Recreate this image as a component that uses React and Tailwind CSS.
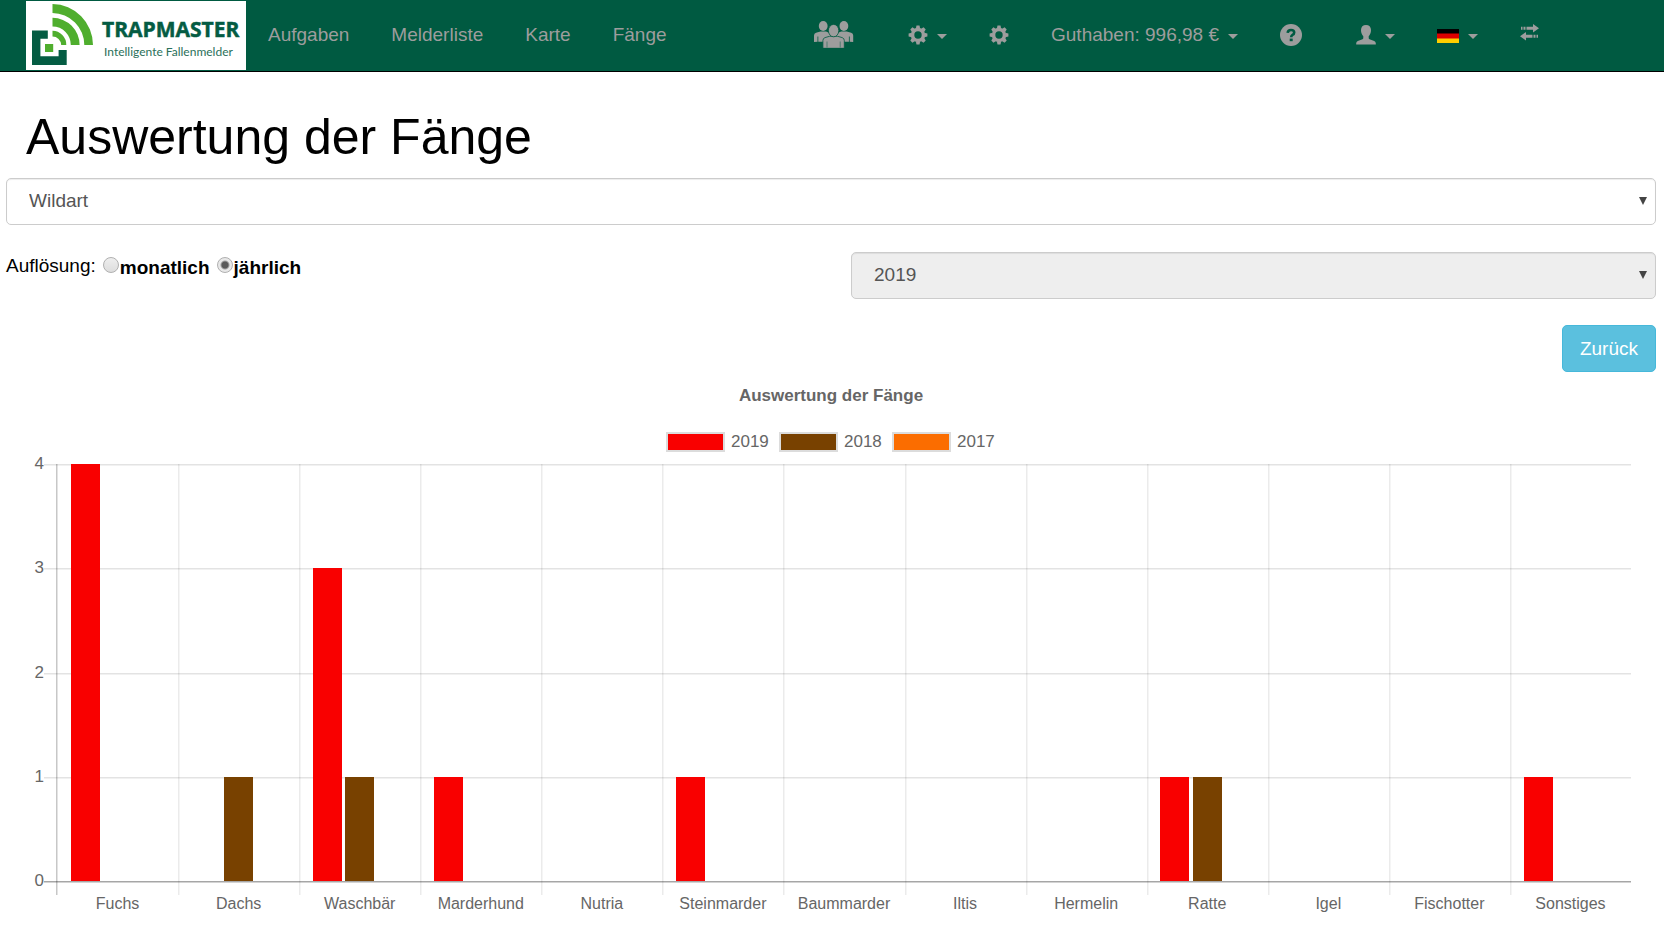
import { useState } from "react";

const YEARS = [
  { label: "2019", color: "#f90000" },
  { label: "2018", color: "#784100" },
  { label: "2017", color: "#fb6d00" },
];

const CATCHES = [
  { name: "Fuchs", values: [4, 0, 0] },
  { name: "Dachs", values: [0, 1, 0] },
  { name: "Waschbär", values: [3, 1, 0] },
  { name: "Marderhund", values: [1, 0, 0] },
  { name: "Nutria", values: [0, 0, 0] },
  { name: "Steinmarder", values: [1, 0, 0] },
  { name: "Baummarder", values: [0, 0, 0] },
  { name: "Iltis", values: [0, 0, 0] },
  { name: "Hermelin", values: [0, 0, 0] },
  { name: "Ratte", values: [1, 1, 0] },
  { name: "Igel", values: [0, 0, 0] },
  { name: "Fischotter", values: [0, 0, 0] },
  { name: "Sonstiges", values: [1, 0, 0] },
];

function Logo() {
  return (
    <svg viewBox="0 0 220 69" className="block h-[69px] w-[220px] bg-white" role="img" aria-label="Trapmaster">
      <g fill="#4fae2e">
        <path d="M26.5 3A41 41 0 0 1 67 44H58.3A32 32 0 0 0 26.5 12Z" />
        <path d="M26.5 16.8A27.2 27.2 0 0 1 53.6 44H44.8A18.4 18.4 0 0 0 26.5 25.4Z" />
        <path d="M26.5 29.8A14 14 0 0 1 40.3 44H35.2A8.7 8.7 0 0 0 26.5 35.6Z" />
        <rect x="19" y="43" width="8.2" height="8" />
      </g>
      <path fill="#045c43" d="M6 29.4H21.8V37.8H14.4V55.2H32.6V49H40.7V64H6Z" />
      <text x="76" y="36" fontSize="21" fill="#045c43" stroke="#045c43" strokeWidth="0.5" className="font-['Open_Sans',sans-serif] font-bold">TRAPMASTER</text>
      <text x="78" y="55" fontSize="12" fill="#2b705a" className="font-['Lato',sans-serif]">Intelligente Fallenmelder</text>
    </svg>
  );
}

function Caret() {
  return (
    <svg viewBox="0 0 10 5" className="mt-1 h-[5px] w-2.5 fill-current" aria-hidden="true">
      <path d="M0 0H10L5 5Z" />
    </svg>
  );
}

function Gear() {
  return (
    <svg viewBox="-10 -10 20 20" className="h-5 w-5 fill-current" aria-hidden="true">
      <path fillRule="evenodd" d="M0-7.2A7.2 7.2 0 1 0 0 7.2A7.2 7.2 0 1 0 0-7.2ZM0-3.7A3.7 3.7 0 1 1 0 3.7A3.7 3.7 0 1 1 0-3.7Z" />
      {[0, 45, 90, 135, 180, 225, 270, 315].map((a) => (
        <path key={a} transform={`rotate(${a})`} d="M-2.2-6.2L-1.5-9.4H1.5L2.2-6.2Z" />
      ))}
    </svg>
  );
}

function Group() {
  return (
    <svg viewBox="0 0 40 27" className="h-[27px] w-10 fill-current" aria-hidden="true">
      <ellipse cx="9.2" cy="5" rx="4.4" ry="5" />
      <ellipse cx="29.9" cy="5" rx="4.4" ry="5" />
      <path d="M0 21V14.5Q0 12.4 2 11.8L6.5 10.6H12L18 13V20.8H4.3V15.5H3.5V20.8Z" />
      <path d="M39.2 21V14.5Q39.2 12.4 37.2 11.8L32.7 10.6H27.2L21 13V20.8H34.9V15.5H35.7V20.8Z" />
      <g stroke="#005a41" strokeWidth="0.8">
        <path d="M8.9 27.3V19.5Q8.9 17.3 11 16.6L15.5 15.3H23.6L28.2 16.6Q30.3 17.3 30.3 19.5V27.3Z" />
        <ellipse cx="19.6" cy="9.6" rx="5.2" ry="6.2" />
        <path fill="none" d="M13 20.5V26.5M26.2 20.5V26.5" strokeWidth="0.5" />
      </g>
    </svg>
  );
}

function Help() {
  return (
    <svg viewBox="0 0 22 22" className="h-[22px] w-[22px] fill-current" aria-hidden="true">
      <circle cx="11" cy="11" r="11" />
      <path fill="none" stroke="#005a41" strokeWidth="2.6" d="M7.7 8.8Q7.9 6 11 6Q14.2 6 14.2 8.5Q14.2 10 12.5 10.9Q11.2 11.6 11.2 13.2" />
      <rect x="9.7" y="14.6" width="3" height="2.6" fill="#005a41" />
    </svg>
  );
}

function User() {
  return (
    <svg viewBox="0 0 20 20" className="h-5 w-5 fill-current" aria-hidden="true">
      <path d="M10 0C13.1 0 15 1.9 15 5C15 7.6 14.1 9.9 12.7 11.2V13.2Q12.8 13.9 13.5 14.2L18.2 16Q19.8 16.7 19.8 18.3V19.4H.2V18.3Q.2 16.7 1.8 16L6.5 14.2Q7.2 13.9 7.3 13.2V11.2C5.9 9.9 5 7.6 5 5C5 1.9 6.9 0 10 0Z" />
    </svg>
  );
}

function Flag() {
  return (
    <svg viewBox="0 0 22 14" className="mt-0.5 h-3.5 w-[22px]" aria-hidden="true">
      <rect width="22" height="14" fill="#000" />
      <rect y="4.5" width="22" height="5.5" fill="#dd0000" />
      <rect y="9.5" width="22" height="4.5" fill="#ffce00" />
    </svg>
  );
}

function Transfer() {
  return (
    <svg viewBox="0 0 19 17" className="mb-1 h-[17px] w-[19px] fill-current" aria-hidden="true">
      <path d="M1 2.8H2.5V5.8H1ZM3.5 2.8H5.5V5.8H3.5ZM6.5 2.8H13V0L19 4.3L13 8.6V5.8H6.5Z" />
      <path d="M18 10.8H16.5V13.8H18ZM15.5 10.8H13.5V13.8H15.5ZM12.5 10.8H6V8L0 12.3L6 16.6V13.8H12.5Z" />
    </svg>
  );
}

function NavItem({ label, className = "", children }) {
  return (
    <li>
      <a href="#" aria-label={label} className={`flex items-center gap-[9px] whitespace-nowrap hover:text-white ${className}`}>
        {children}
      </a>
    </li>
  );
}

function Navbar() {
  return (
    <nav className="flex h-[72px] items-start border-b border-black bg-[#005a41] pl-[26px] text-[19px] text-[#9d9d9d]">
      <a href="#" className="shrink-0 pt-px">
        <Logo />
      </a>
      <ul className="flex h-[69px] items-center gap-[42px] pl-[22px]">
        <NavItem>Aufgaben</NavItem>
        <NavItem>Melderliste</NavItem>
        <NavItem>Karte</NavItem>
        <NavItem>Fänge</NavItem>
      </ul>
      <ul className="ml-auto flex h-[69px] items-center gap-[42px] pr-[125px]">
        <NavItem label="Gruppen" className="pr-3"><Group /></NavItem>
        <NavItem label="Einstellungen"><Gear /><Caret /></NavItem>
        <NavItem label="Optionen"><Gear /></NavItem>
        <NavItem>Guthaben: 996,98 €<Caret /></NavItem>
        <NavItem label="Hilfe" className="pr-3"><Help /></NavItem>
        <NavItem label="Benutzer"><User /><Caret /></NavItem>
        <NavItem label="Sprache"><Flag /><Caret /></NavItem>
        <NavItem label="Wechseln"><Transfer /></NavItem>
      </ul>
    </nav>
  );
}

function Select({ label, options, disabled }) {
  return (
    <div className="relative">
      <select
        aria-label={label}
        disabled={disabled}
        className="block h-[47px] w-full appearance-none rounded-[5px] border border-[#ccc] bg-white pb-0.5 pl-[22px] text-[19px] text-[#555] opacity-100 shadow-[inset_0_1px_1px_rgba(0,0,0,0.075)] disabled:bg-[#eee]"
      >
        {options.map((o) => <option key={o}>{o}</option>)}
      </select>
      <svg viewBox="0 0 8 8" className="pointer-events-none absolute top-[19px] right-[9px] h-2 w-2 fill-[#444]" aria-hidden="true">
        <path d="M0 0H8L4 8Z" />
      </svg>
    </div>
  );
}

function Radio({ id, label, checked, onChange }) {
  return (
    <div className="flex items-start">
      <input
        id={id}
        type="radio"
        name="resolution"
        checked={checked}
        onChange={onChange}
        className="mt-[5px] h-4 w-4 appearance-none rounded-full border border-[#b0b0b0] bg-linear-to-b from-[#eee] to-[#ddd] checked:bg-[radial-gradient(circle,#5a5a5a_0_3px,#e8e8e8_5px)]"
      />
      <label htmlFor={id} className="pt-0.5 pl-px font-bold">{label}</label>
    </div>
  );
}

function Chart() {
  const left = 51;
  const right = 1625;
  const bottom = 509;
  const unit = 104.25;
  const step = (right - left) / CATCHES.length;
  const slot = (step * 0.8) / YEARS.length;
  const yOf = (v) => Math.round(bottom - v * unit);
  return (
    <svg viewBox="0 0 1650 548" className="block w-full" role="img" aria-label="Auswertung der Fänge" fill="#666" fontSize="17">
      <text x="825" y="29" textAnchor="middle" className="font-bold">Auswertung der Fänge</text>
      {YEARS.map((y, i) => (
        <g key={y.label} transform={`translate(${661 + i * 113} 60)`}>
          <rect x="0" y="1" width="57" height="18" fill={y.color} stroke="#dcdcdc" strokeWidth="2" />
          <text x="64" y="15">{y.label}</text>
        </g>
      ))}
      {[0, 1, 2, 3, 4].map((v) => (
        <g key={v}>
          <rect x="38" y={yOf(v)} width={right - 38} height="1.5" fill="#000" fillOpacity={v ? 0.11 : 0.35} />
          <text x="38" y={yOf(v) + 5} textAnchor="end">{v}</text>
        </g>
      ))}
      {CATCHES.map((c, i) => {
        const x = left + i * step;
        return (
          <g key={c.name}>
            <rect x={i ? Math.round(x) : left - 1} y={yOf(4)} width="1.5" height={bottom - yOf(4) + 14} fill="#000" fillOpacity={i ? 0.08 : 0.22} />
            {c.values.map((v, k) =>
              v ? (
                <rect key={k} x={Math.round(x + step * 0.1 + slot * (k + 0.05))} y={yOf(v)} width="29" height={bottom - yOf(v)} fill={YEARS[k].color} />
              ) : null
            )}
            <text x={x + step / 2} y="537" fontSize="16" textAnchor="middle">{c.name}</text>
          </g>
        );
      })}
    </svg>
  );
}

export default function App() {
  const [resolution, setResolution] = useState("year");
  return (
    <div className="bg-white font-['Liberation_Sans',Arial,sans-serif] text-[19px] leading-[27px] text-black">
      <Navbar />
      <main className="pr-2 pl-1.5">
        <h1 className="pt-[38px] pb-[13px] pl-5 text-[50px] leading-[55px]">Auswertung der Fänge</h1>
        <Select label="Auswertung nach" options={["Wildart"]} />
        <div className="mt-[27px] grid grid-cols-2 gap-10">
          <fieldset className="flex items-start gap-[7px]">
            <legend className="float-left">Auflösung:</legend>
            <Radio id="month" label="monatlich" checked={resolution === "month"} onChange={() => setResolution("month")} />
            <Radio id="year" label="jährlich" checked={resolution === "year"} onChange={() => setResolution("year")} />
          </fieldset>
          <Select label="Jahr" options={["2019"]} disabled={resolution === "year"} />
        </div>
        <div className="mt-[26px] flex justify-end">
          <button type="button" className="h-[47px] rounded-[5px] border border-[#46b8da] bg-[#5bc0de] px-[17px] text-white">Zurück</button>
        </div>
        <Chart />
      </main>
    </div>
  );
}
